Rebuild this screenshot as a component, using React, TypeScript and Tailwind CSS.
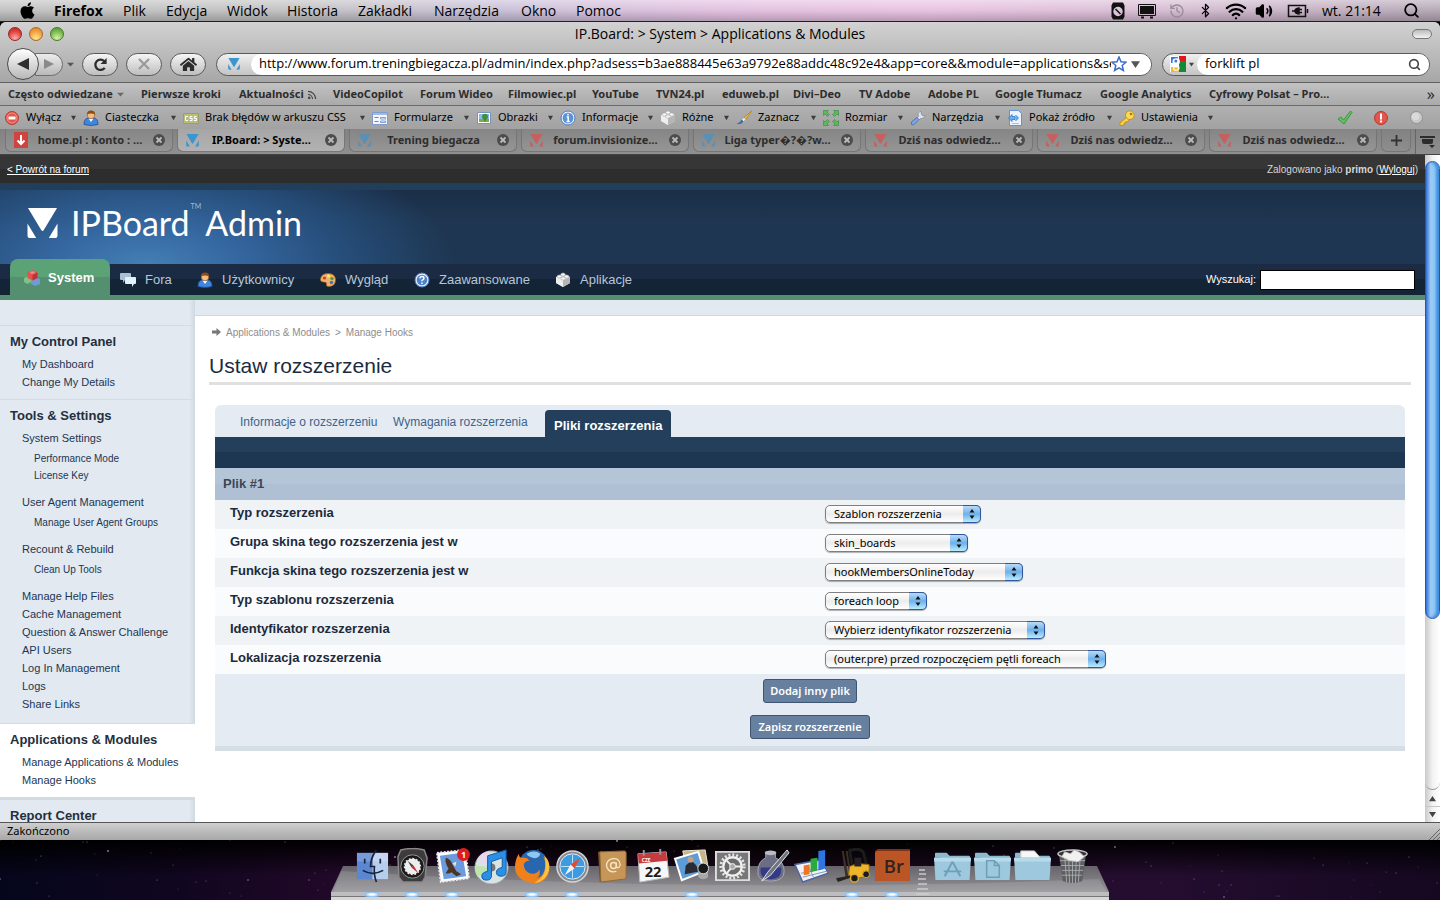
import React from 'react';
import { Bluetooth, History, Search, Volume2, Wifi } from 'lucide-react';
import { FaApple, FaHome } from 'react-icons/fa';

interface IconProps {
    className?: string;
}

/* ---------- Shared icons ---------- */

const BoardMark: React.FC<IconProps> = ({ className = 'size-4 text-[#3d95d0]' }) => (
    <svg viewBox="0 0 32 32" className={className} fill="currentColor">
        <path d="M1 0h30L17.500 22.500q-1.500 2.500-3 0z" />
        <path d="M0.500 16v12q0 3 3 3h6z" />
        <path d="M31.500 16v12q0 3-3 3h-6z" />
    </svg>
);

const CaretIcon: React.FC<IconProps> = ({ className = 'w-[5px] h-[6px] text-[#3c3c3c]' }) => (
    <svg viewBox="0 0 8 8" className={className} fill="currentColor" preserveAspectRatio="none">
        <path d="M0 1h8L4 7z" />
    </svg>
);

const UserIcon: React.FC<IconProps> = ({ className = 'size-4' }) => (
    <svg viewBox="0 0 16 16" className={className}>
        <path d="M1 14.500q0-6 4-6.500h6q4 .5 4 6.500-7 2-14 0z" fill="#3f86dd" stroke="#1f4f9a" strokeWidth=".8" />
        <path d="M5.500 8.500h5L8 12z" fill="#fff" />
        <circle cx="8" cy="5" r="3.800" fill="#f2bd84" stroke="#8a4e14" strokeWidth=".6" />
        <path d="M4 4.500Q4 .5 8 .5t4 4Q8 2.500 4 4.500z" fill="#8f4c10" />
    </svg>
);

const BrickIcon: React.FC<IconProps> = ({ className = 'size-4' }) => (
    <svg viewBox="0 0 16 16" className={className}>
        <path d="M1 5l7-3 7 3v6l-7 4-7-4z" fill="#dedede" />
        <path d="M8 8.500l7-3.500v6l-7 4z" fill="#b5b5b5" />
        <path d="M1 5l7 3.500V15l-7-4z" fill="#eee" />
        <g fill="#fafafa" stroke="#a8a8a8" strokeWidth=".6">
            <ellipse cx="8" cy="2.500" rx="2.200" ry="1.500" />
            <ellipse cx="4.300" cy="4.500" rx="2.200" ry="1.500" />
            <ellipse cx="11.700" cy="4.500" rx="2.200" ry="1.500" />
            <ellipse cx="8" cy="6.500" rx="2.200" ry="1.500" />
        </g>
    </svg>
);

const StopSign = () => (
    <svg viewBox="0 0 16 16" className="size-4">
        <circle cx="8" cy="8" r="6.500" fill="#e2564b" stroke="#bd3b32" />
        <circle cx="8" cy="8" r="5" fill="none" stroke="#f3a39d" strokeWidth=".8" />
        <path d="M4.500 6.500h7v3h-7z" fill="#fff" />
    </svg>
);

const CssIcon = () => (
    <svg viewBox="0 0 16 16" className="size-4">
        <path d="M.5 3.500h15v10H.5z" fill="#b9bd7c" stroke="#9ba05f" />
        <path d="M5 6.500H2.500v4H5M9.200 6.500H7v2h2.200v2H6.800M13.500 6.500h-2.200v2h2.200v2h-2.500" fill="none" stroke="#fff" />
    </svg>
);

const FormIcon = () => (
    <svg viewBox="0 0 16 16" className="size-4">
        <path d="M.5 2.500h15v12H.5z" fill="#f3f7fd" stroke="#7f9ccc" />
        <path d="M1 3h14v2H1z" fill="#9dbbe8" />
        <path d="M2.500 7.500h4M2.500 11.500h4" stroke="#6487c4" />
        <path d="M8.500 7.500h5v1.500h-5zM8.500 11h5v1.500h-5z" fill="#fff" stroke="#6487c4" strokeWidth=".8" />
    </svg>
);

const ImageIcon = () => (
    <svg viewBox="0 0 16 16" className="size-4">
        <path d="M1.500 2.500h13v11h-13z" fill="#fff" stroke="#7a93bd" />
        <path d="M3 4h10v5H3z" fill="#8cb8ee" />
        <path d="M3 9h10v3H3z" fill="#73b04c" />
        <circle cx="9" cy="6.800" r="3" fill="#3f9238" />
        <path d="M8.500 9h1v2.500h-1z" fill="#784a20" />
    </svg>
);

const InfoIcon = () => (
    <svg viewBox="0 0 16 16" className="size-4">
        <circle cx="8" cy="8" r="7" fill="#fff" stroke="#4a78bd" />
        <circle cx="8" cy="8" r="5.500" fill="#5b92d8" />
        <path d="M8 3.800v1.700M6.700 7h1.500v4.500M6.500 11.500h3.300" stroke="#fff" strokeWidth="1.500" fill="none" />
    </svg>
);

const HelpIcon = () => (
    <svg viewBox="0 0 16 16" className="size-4">
        <circle cx="8" cy="8" r="7" fill="#e6f0fc" stroke="#4a78bd" />
        <circle cx="8" cy="8" r="5.300" fill="#4d83c9" />
        <path d="M6 6.500q0-2 2-2t2 1.700Q10 7.500 8 8.300v1M8 10.500v1.500" stroke="#fff" strokeWidth="1.400" fill="none" />
    </svg>
);

const BrushIcon = () => (
    <svg viewBox="0 0 16 16" className="size-4">
        <path d="M15.500 1L8 7.500l2 2z" fill="#f2b73b" stroke="#b47d14" strokeWidth=".7" />
        <path d="M8 7.500L5.500 9.500l2 2L10 9.500z" fill="#e9e9e9" stroke="#999" strokeWidth=".6" />
        <path d="M5.500 9.500Q4 13 .5 13.500 5 15.500 7.500 11.500z" fill="#3f6fae" />
    </svg>
);

const ResizeIcon = () => (
    <svg viewBox="0 0 16 16" className="size-4" fill="#5cb85a" stroke="#2f8f3a" strokeWidth=".6">
        <path d="M.5.5h5L4 2l2.500 2.500-2 2L2 4 .5 5.500z" />
        <path d="M15.500.5v5L14 4l-2.500 2.500-2-2L12 2 10.500.5z" />
        <path d="M.5 15.500v-5L2 12l2.500-2.500 2 2L4 14l1.500 1.500z" />
        <path d="M15.500 15.500h-5L12 14l-2.500-2.500 2-2L14 12l1.500-1.500z" />
    </svg>
);

const WrenchIcon = () => (
    <svg viewBox="0 0 16 16" className="size-4">
        <path d="M10 1.500q-3 1.500-1.500 5L7 8l2 2 1.500-1.500q3.500.5 5-3l-2.500.5-1.800-1.800L11.500 2z" fill="#dfe3ea" stroke="#7d869a" strokeWidth=".7" />
        <path d="M7 7.500L1.500 12q-1 3 2 3L9 9.500z" fill="#7da6e6" stroke="#3f69ad" strokeWidth=".8" />
    </svg>
);

const SourceIcon = () => (
    <svg viewBox="0 0 16 16" className="size-4">
        <path d="M2.500 .5h9l3 3v12h-12z" fill="#eaf3ff" stroke="#5f93d6" />
        <path d="M8.500 5l3 3-3 3M5 4.500L1.500 8 5 11.500v-2h3v-3H5z" fill="#6aaeed" stroke="#2f78c6" strokeWidth=".8" />
        <path d="M5 13.500h7" stroke="#9dc0ee" />
    </svg>
);

const KeyIcon = () => (
    <svg viewBox="0 0 16 16" className="size-4">
        <path d="M8 7L1 13v2.500h3.500V14H6v-2h2l3-3z" fill="#fbd146" stroke="#bd8610" strokeWidth=".8" />
        <circle cx="10.800" cy="5.200" r="4.300" fill="#fcd95a" stroke="#bd8610" strokeWidth=".8" />
        <circle cx="12" cy="4" r="1.300" fill="#a8780c" />
    </svg>
);

const ChatIcon = () => (
    <svg viewBox="0 0 16 16" className="size-4">
        <path d="M1 1h9q1 0 1 1v5q0 1-1 1H5l-2 3V8H1Q0 8 0 7V2q0-1 1-1z" fill="#a9bfd4" />
        <path d="M6 5h9q1 0 1 1v5q0 1-1 1h-1l-2 3v-3H6q-1 0-1-1V6q0-1 1-1z" fill="#e4f1fb" />
    </svg>
);

const PaletteIcon = () => (
    <svg viewBox="0 0 16 16" className="size-4">
        <path d="M8 1.500q7 0 7.500 6 0 7-7 7-2.500 0-2-2.500t-3-2Q.5 10 .5 7.500q.5-6 7.500-6z" fill="#f0b268" stroke="#b06a25" strokeWidth=".7" />
        <circle cx="4.500" cy="6" r="1.600" fill="#d43c2e" />
        <circle cx="8.500" cy="4" r="1.500" fill="#f6f06a" />
        <circle cx="12" cy="6.500" r="1.600" fill="#3d9a47" />
        <circle cx="11.500" cy="10.500" r="1.700" fill="#3d71c4" />
    </svg>
);

const BlocksIcon = () => (
    <svg viewBox="0 0 16 16" className="size-4">
        <path d="M0 8l3.500-1.500L7 8v4l-3.500 2L0 12z" fill="#7dc284" />
        <path d="M7 9l4.500-1.500L16 9v5l-4.500 2L7 14z" fill="#6f9bd6" />
        <path d="M3.500 2.500L8.500 0l5 2.500V8l-5 2.500-5-2.500z" fill="#e05350" />
        <path d="M8.500 5l5-2.500V8l-5 2.500z" fill="#bd3334" />
        <ellipse cx="8.500" cy="2.500" rx="2.500" ry="1.300" fill="#f08a85" />
    </svg>
);

/* ---------- Mac menu bar ---------- */

const menus = [
    { label: 'Plik', width: 'w-[43px]' },
    { label: 'Edycja', width: 'w-[61px]' },
    { label: 'Widok', width: 'w-[60px]' },
    { label: 'Historia', width: 'w-[71px]' },
    { label: 'Zakładki', width: 'w-[76px]' },
    { label: 'Narzędzia', width: 'w-[87px]' },
    { label: 'Okno', width: 'w-[55px]' },
    { label: 'Pomoc', width: 'w-[60px]' },
];

const MenuBar = () => (
    <header className="flex h-[22px] shrink-0 items-center border-b border-[#241c2b] bg-[linear-gradient(to_bottom,rgba(255,255,255,0.35),rgba(0,0,0,0.02)_50%,rgba(0,0,0,0.22)),linear-gradient(to_right,#c6c6c6,#c6c6c8_22%,#cdc4dc_35%,#e6c4e4_50%,#ecc6e6_65%,#dcc2d8_80%,#b9acba)] text-sm text-black">
        <div className="flex w-[54px] justify-center">
            <FaApple className="size-[19px]" />
        </div>
        <button className="w-[69px] text-left font-bold">Firefox</button>
        {menus.map((m) => (
            <button key={m.label} className={`${m.width} text-left whitespace-nowrap`}>
                {m.label}
            </button>
        ))}
        <div className="ml-auto flex items-center pr-5">
            <svg viewBox="0 0 16 18" className="mr-3 h-[18px] w-4">
                <path d="M3 .5h10l1.500 3v11l-1.500 3H3l-1.500-3v-11z" fill="#111" />
                <circle cx="8" cy="9.500" r="4.700" fill="#dcc3da" />
                <path d="M5.500 7l5 5" stroke="#111" strokeWidth="1.500" />
            </svg>
            <svg viewBox="0 0 18 16" className="mr-[13px] h-4 w-[18px]">
                <path d="M.5 1.500h17v11H.5z" fill="none" stroke="#111" />
                <path d="M2 3h14v8H2z" fill="#111" />
                <path d="M3 14.500h3M12 14.500h3" stroke="#111" strokeWidth="2" />
            </svg>
            <History className="mr-[13px] size-4 text-[#9b8b9b]" />
            <Bluetooth className="mr-3 size-[15px]" />
            <Wifi className="mr-2 size-[22px]" strokeWidth={2.500} />
            <Volume2 className="mr-[14px] size-[18px]" fill="currentColor" />
            <svg viewBox="0 0 22 14" className="mr-[13px] h-[14px] w-[22px]" fill="none" stroke="#111" strokeWidth="1.500">
                <path d="M1.500 1.500h17v11h-17z" />
                <path d="M20.500 5v4" />
                <path d="M5 7h3M15 5.500h-3M15 8.500h-3" />
                <path d="M8 7q0-2.500 4-3v6q-4-.5-4-3z" fill="#111" />
            </svg>
            <span className="mr-4 w-[65px] whitespace-nowrap">wt. 21:14</span>
            <Search className="size-[17px]" strokeWidth={2.500} />
        </div>
    </header>
);

/* ---------- Browser chrome ---------- */

const TitleBar = () => (
    <div className="flex h-6 items-center pr-2 pl-2">
        <div className="flex w-[60px] gap-[7px]">
            <span className="size-[14px] rounded-full border border-[#8c2a28] bg-[radial-gradient(circle_at_50%_85%,#ffb0a8,#e0403c_60%,#c8201c)]" />
            <span className="size-[14px] rounded-full border border-[#a8662a] bg-[radial-gradient(circle_at_50%_85%,#ffe690,#f0a03c_60%,#d88028)]" />
            <span className="size-[14px] rounded-full border border-[#48762e] bg-[radial-gradient(circle_at_50%_85%,#d4f4a0,#78b850_60%,#509030)]" />
        </div>
        <h1 className="flex-1 text-center text-sm">IP.Board: &gt; System &gt; Applications &amp; Modules</h1>
        <div className="flex w-[60px] justify-end">
            <span className="h-[10px] w-5 rounded-full border border-[#777] bg-linear-to-b from-[#bbb] to-[#f4f4f4]" />
        </div>
    </div>
);

const ToolButton = ({ label, children }: { label: string; children: React.ReactNode }) => (
    <button
        aria-label={label}
        className="flex h-[23px] w-9 shrink-0 items-center justify-center rounded-full border border-[#5a5a5a] bg-linear-to-b from-[#f6f6f6] to-[#bebebe]"
    >
        {children}
    </button>
);

const NavToolbar = () => (
    <div className="flex h-[37px] items-center gap-2 border-b border-[#606060] pr-[10px] pl-[7px]">
        <div className="flex items-center">
            <button
                aria-label="Wstecz"
                className="z-10 flex size-8 shrink-0 items-center justify-center rounded-full border border-[#4c4c4c] bg-linear-to-b from-white to-[#b8b8b8]"
            >
                <svg viewBox="0 0 12 12" className="size-3" fill="#2e2e2e">
                    <path d="M12 0v12L0 6z" />
                </svg>
            </button>
            <button
                aria-label="Dalej"
                className="-ml-1 flex h-[23px] w-7 shrink-0 items-center justify-center rounded-r-full border border-[#6e6e6e] bg-linear-to-b from-[#ededed] to-[#b8b8b8]"
            >
                <svg viewBox="0 0 12 12" className="size-[10px]" fill="#8a8a8a">
                    <path d="M0 0v12l12-6z" />
                </svg>
            </button>
            <CaretIcon className="ml-1 h-[5px] w-[7px] text-[#555]" />
        </div>
        <ToolButton label="Odśwież">
            <svg viewBox="0 0 16 16" className="size-[15px]" fill="none" stroke="#2c2c2c" strokeWidth="2.400">
                <path d="M12.500 11.500A5.500 5.500 0 1 1 12 4.500" />
                <path d="M14.500 1v6.500H8z" fill="#2c2c2c" stroke="none" />
            </svg>
        </ToolButton>
        <ToolButton label="Zatrzymaj">
            <svg viewBox="0 0 12 12" className="size-3" stroke="#9a9a9a" strokeWidth="2.200">
                <path d="M1 1l10 10M11 1L1 11" />
            </svg>
        </ToolButton>
        <ToolButton label="Strona startowa">
            <FaHome className="size-[17px] text-[#2c2c2c]" />
        </ToolButton>
        <div className="ml-[2px] flex h-[23px] min-w-0 flex-1 items-center overflow-hidden rounded-full border border-[#5a5a5a] bg-linear-to-b from-[#f0f0f0] to-[#c4c4c4]">
            <BoardMark className="mx-[11px] size-3 shrink-0 text-[#3d95d0]" />
            <div className="flex h-full min-w-0 flex-1 items-center rounded-l-full bg-white pr-[11px] pl-2">
                <input
                    aria-label="Adres"
                    className="min-w-0 flex-1 bg-transparent text-[13px] text-black outline-none"
                    defaultValue="http://www.forum.treningbiegacza.pl/admin/index.php?adsess=b3ae888445e63a9792e88addc48c92e4&app=core&&module=applications&sec"
                />
                <svg viewBox="0 0 16 16" className="size-4 shrink-0" fill="#fff" stroke="#3a6ccc" strokeWidth="1.500">
                    <path d="M8 1l2 4.800 5 .4-3.800 3.300 1.200 5L8 11.800l-4.400 2.700 1.200-5L1 6.200l5-.4z" />
                </svg>
                <CaretIcon className="ml-1 h-[9px] w-[9px] shrink-0 text-[#555]" />
            </div>
        </div>
        <div className="ml-[2px] flex h-[23px] w-[268px] shrink-0 items-center overflow-hidden rounded-full border border-[#5a5a5a] bg-linear-to-b from-[#f0f0f0] to-[#c4c4c4]">
            <svg viewBox="0 0 16 16" className="ml-[7px] size-4 shrink-0">
                <path d="M0 0h16v16H0z" fill="#fff" />
                <path d="M1 1h7v6H1z" fill="#3c78e0" />
                <path d="M9 0h7v5H9z" fill="#e01818" />
                <path d="M9 5h7v11H9z" fill="#128a38" />
                <path d="M1 11h8v5H1z" fill="#f4b82a" />
                <path d="M9 2.500Q2.500 1.500 2.500 5.500T7.500 8Q3 9 3 12.500t5 2q3-1.500.5-5.500 2.500-3 .5-6.500z" fill="#fff" />
                <circle cx="5.800" cy="5" r="1.500" fill="#3c78e0" />
                <ellipse cx="6" cy="12.500" rx="1.800" ry="1.200" fill="#f4b82a" />
            </svg>
            <CaretIcon className="mx-[3px] h-[5px] w-[5px] shrink-0 text-[#444]" />
            <div className="flex h-full min-w-0 flex-1 items-center rounded-l-full bg-white pr-2 pl-2">
                <input
                    aria-label="Szukaj"
                    className="min-w-0 flex-1 bg-transparent text-[13px] text-black outline-none"
                    defaultValue="forklift pl"
                />
                <Search className="size-[13px] shrink-0 text-[#444]" strokeWidth={3} />
            </div>
        </div>
    </div>
);

const bookmarks = [
    { label: 'Często odwiedzane', width: 'w-[133px]', mark: 'caret' },
    { label: 'Pierwsze kroki', width: 'w-[98px]' },
    { label: 'Aktualności', width: 'w-[94px]', mark: 'feed' },
    { label: 'VideoCopilot', width: 'w-[87px]' },
    { label: 'Forum Wideo', width: 'w-[88px]' },
    { label: 'Filmowiec.pl', width: 'w-[84px]' },
    { label: 'YouTube', width: 'w-[64px]' },
    { label: 'TVN24.pl', width: 'w-[66px]' },
    { label: 'eduweb.pl', width: 'w-[71px]' },
    { label: 'Divi–Deo', width: 'w-[66px]' },
    { label: 'TV Adobe', width: 'w-[69px]' },
    { label: 'Adobe PL', width: 'w-[67px]' },
    { label: 'Google Tłumacz', width: 'w-[105px]' },
    { label: 'Google Analytics', width: 'w-[109px]' },
    { label: 'Cyfrowy Polsat – Pro…', width: 'w-[140px]' },
];

const BookmarksBar = () => (
    <nav className="flex h-[23px] items-center border-b border-[#6a6a6a] bg-linear-to-b from-[#c2c2c2] to-[#aaa] pr-[5px] pl-2 font-['Noto_Sans',sans-serif] text-[11px] font-bold text-[#2d2d2d]">
        {bookmarks.map((b) => (
            <a key={b.label} href="#" className={`${b.width} flex shrink-0 items-center gap-1 whitespace-nowrap`}>
                {b.label}
                {b.mark === 'caret' && <CaretIcon className="h-[5px] w-[7px] text-[#6a6a6a]" />}
                {b.mark === 'feed' && (
                    <svg viewBox="0 0 10 10" className="size-[9px]" fill="none" stroke="#444" strokeWidth="1.300">
                        <path d="M0 1.500A8.500 8.500 0 0 1 8.500 10M0 5a5 5 0 0 1 5 5" />
                        <circle cx="1.300" cy="8.700" r=".8" fill="#444" />
                    </svg>
                )}
            </a>
        ))}
        <span className="ml-auto text-base leading-none font-normal">»</span>
    </nav>
);

const devTools = [
    { label: 'Wyłącz', width: 'w-[79px]', icon: <StopSign /> },
    { label: 'Ciasteczka', width: 'w-[100px]', icon: <UserIcon /> },
    { label: 'Brak błędów w arkuszu CSS', width: 'w-[189px]', icon: <CssIcon /> },
    { label: 'Formularze', width: 'w-[104px]', icon: <FormIcon /> },
    { label: 'Obrazki', width: 'w-[84px]', icon: <ImageIcon /> },
    { label: 'Informacje', width: 'w-[100px]', icon: <InfoIcon /> },
    { label: 'Różne', width: 'w-[76px]', icon: <BrickIcon /> },
    { label: 'Zaznacz', width: 'w-[87px]', icon: <BrushIcon /> },
    { label: 'Rozmiar', width: 'w-[87px]', icon: <ResizeIcon /> },
    { label: 'Narzędzia', width: 'w-[97px]', icon: <WrenchIcon /> },
    { label: 'Pokaż źródło', width: 'w-[112px]', icon: <SourceIcon /> },
    { label: 'Ustawienia', width: 'w-[101px]', icon: <KeyIcon /> },
];

const DevToolbar = () => (
    <div className="flex h-[23px] items-center bg-linear-to-b from-[#b0b0b0] to-[#a2a2a2] pr-4 pl-1 font-['Noto_Sans',sans-serif] text-[11px] text-black">
        {devTools.map((t) => (
            <button key={t.label} className={`${t.width} flex shrink-0 items-center gap-[6px] pr-[7px] whitespace-nowrap`}>
                {t.icon}
                <span>{t.label}</span>
                <CaretIcon className="ml-auto h-[6px] w-[5px] text-[#3c3c3c]" />
            </button>
        ))}
        <div className="ml-auto flex items-center gap-5">
            <svg viewBox="0 0 16 16" className="size-4">
                <path d="M1 9l3-2 2.500 3L13.500 1l1.500 1.500L7 14z" fill="#5fc25c" stroke="#2c8c34" strokeWidth=".8" />
            </svg>
            <svg viewBox="0 0 16 16" className="size-4">
                <circle cx="8" cy="8" r="6.500" fill="#e2564b" stroke="#b8372d" />
                <path d="M8 3.500v6M8 10.500v2" stroke="#fff" strokeWidth="2" />
            </svg>
            <svg viewBox="0 0 16 16" className="size-[15px]">
                <circle cx="8" cy="8" r="6.500" fill="#c9c9c9" stroke="#8f8f8f" />
                <circle cx="7" cy="7" r="4" fill="#dadada" />
            </svg>
        </div>
    </div>
);

const tabs = [
    { label: 'home.pl : Konto : …', icon: 'home' },
    { label: 'IP.Board: > Syste…', icon: 'blue', active: true },
    { label: 'Trening biegacza', icon: 'blue' },
    { label: 'forum.invisionize…', icon: 'red' },
    { label: 'Liga typer\uFFFD?\uFFFD?w…', icon: 'blue' },
    { label: 'Dziś nas odwiedz…', icon: 'red' },
    { label: 'Dziś nas odwiedz…', icon: 'red' },
    { label: 'Dziś nas odwiedz…', icon: 'red' },
];

const TabIcon = ({ kind, active }: { kind: string; active?: boolean }) => {
    if (kind === 'home') {
        return (
            <svg viewBox="0 0 14 16" className="h-4 w-[14px] shrink-0">
                <path d="M0 0h14v16H0z" fill="#d0443f" />
                <path d="M7 3v9M3.500 8.500L7 12l3.500-3.500" fill="none" stroke="#fff" strokeWidth="2" />
            </svg>
        );
    }
    const tint = kind === 'red' ? 'text-[#c4615f]' : active ? 'text-[#3d95d0]' : 'text-[#5b8fb3]';
    return <BoardMark className={`size-[13px] shrink-0 ${tint}`} />;
};

const TabBar = () => (
    <div className="flex h-[26px] items-start gap-1 border-b border-[#444] bg-linear-to-b from-[#828282] to-[#8f8f8f] pl-[5px]">
        {tabs.map((tab, i) => (
            <div
                key={i}
                className={`flex h-[23px] w-[168px] min-w-0 items-center rounded-b-md border-x border-b pr-[6px] pl-2 ${tab.active
                        ? 'border-[#777] bg-linear-to-b from-[#a6a6a6] to-[#b2b2b2] text-black'
                        : 'border-[#757575] bg-linear-to-b from-[#858585] to-[#959595] text-[#2d2d2d]'
                    }`}
            >
                <TabIcon kind={tab.icon} active={tab.active} />
                <a href="#" className="min-w-0 flex-1 text-center font-['Noto_Sans',sans-serif] text-[11px] font-bold whitespace-nowrap">
                    {tab.label}
                </a>
                <button aria-label="Zamknij kartę" className="shrink-0">
                    <svg viewBox="0 0 14 14" className="size-[14px]">
                        <circle cx="7" cy="7" r="6" fill="#4c4c4c" />
                        <path d="M4.500 4.500l5 5M9.500 4.500l-5 5" stroke="#bbb" strokeWidth="1.800" />
                    </svg>
                </button>
            </div>
        ))}
        <button aria-label="Nowa karta" className="flex h-[23px] w-[30px] shrink-0 items-center justify-center rounded-b-md border-x border-b border-[#757575]">
            <svg viewBox="0 0 12 12" className="size-[11px]" stroke="#333" strokeWidth="2">
                <path d="M6 0v12M0 6h12" />
            </svg>
        </button>
        <button aria-label="Lista kart" className="flex h-full flex-1 items-center justify-center border-l border-[#666]">
            <svg viewBox="0 0 16 14" className="h-[14px] w-4" fill="#2c2c2c">
                <path d="M0 1h15v2H0zM2 4h11v3q0 2-2 2H4Q2 9 2 7zM9 10h6l-3 3z" />
            </svg>
        </button>
    </div>
);

/* ---------- Admin page ---------- */

const mainNav = [
    { label: 'Fora', width: 'w-[77px]', icon: <ChatIcon /> },
    { label: 'Użytkownicy', width: 'w-[123px]', icon: <UserIcon /> },
    { label: 'Wygląd', width: 'w-[94px]', icon: <PaletteIcon /> },
    { label: 'Zaawansowane', width: 'w-[141px]', icon: <HelpIcon /> },
    { label: 'Aplikacje', width: 'w-[90px]', icon: <BrickIcon /> },
];

const PageHeader = () => (
    <header>
        <div className="flex h-7 items-center justify-between bg-linear-to-b from-[#363636] from-50% to-[#2d2d2d] to-50% px-[7px] text-[10px] text-[#d6d6d6]">
            <a href="#" className="text-white underline">
                &lt; Powrót na forum
            </a>
            <span>
                Zalogowano jako <b>primo</b> (
                <a href="#" className="text-white underline">
                    Wyloguj
                </a>
                )
            </span>
        </div>
        <div className="border-t-[7px] border-[#213e5b] bg-[radial-gradient(ellipse_310px_130px_at_145px_75px,#4380b4,#3567a0_30%,#264d79_65%,transparent),linear-gradient(to_bottom,#1b2e47,#1e3651_40%,#1e3651)]">
            <div className="flex h-[74px] items-center pb-2 pl-[27px] text-white">
                <BoardMark className="size-[31px] text-white" />
                <div className="ml-[13px] flex font-['Lato',sans-serif] text-[34px] leading-none font-normal">
                    IPBoard
                    <sup className="ml-px text-[7px] leading-none text-[#9db9d6]">TM</sup>
                    <span className="ml-1">Admin</span>
                </div>
            </div>
        </div>
        <nav className="flex h-9 items-start border-b-[5px] border-[#54906f] bg-linear-to-b from-[#1a2b43] from-50% to-[#142437] to-50% pl-[10px] text-[13px] text-[#b7c7d8]">
            <a
                href="#"
                className="-mt-[5px] flex h-[37px] w-[100px] items-center gap-2 rounded-t-lg bg-linear-to-b from-[#5ba277] from-50% to-[#54906f] to-50% pl-[14px] font-bold text-white"
            >
                <BlocksIcon />
                System
            </a>
            <div className="flex h-[31px] flex-1 items-center pl-[10px]">
                {mainNav.map((item) => (
                    <a key={item.label} href="#" className={`${item.width} flex shrink-0 items-center gap-[9px]`}>
                        {item.icon}
                        {item.label}
                    </a>
                ))}
                <label htmlFor="site-search" className="ml-auto text-[11px] text-white">
                    Wyszukaj:
                </label>
                <input id="site-search" className="mr-[10px] ml-1 h-5 w-[155px] border border-black bg-white px-1 text-black" />
            </div>
        </nav>
    </header>
);

interface SideItem {
    label: string;
    children?: string[];
}

const sections: { title: string; style: string; items: SideItem[] }[] = [
    {
        title: 'My Control Panel',
        style: 'border-t border-[#d0dce9] pb-2',
        items: [{ label: 'My Dashboard' }, { label: 'Change My Details' }],
    },
    {
        title: 'Tools & Settings',
        style: 'border-t border-[#d0dce9] pb-[10px]',
        items: [
            { label: 'System Settings', children: ['Performance Mode', 'License Key'] },
            { label: 'User Agent Management', children: ['Manage User Agent Groups'] },
            { label: 'Recount & Rebuild', children: ['Clean Up Tools'] },
            { label: 'Manage Help Files' },
            { label: 'Cache Management' },
            { label: 'Question & Answer Challenge' },
            { label: 'API Users' },
            { label: 'Log In Management' },
            { label: 'Logs' },
            { label: 'Share Links' },
        ],
    },
    {
        title: 'Applications & Modules',
        style: 'border-t border-[#d0dce9] bg-white pb-2',
        items: [{ label: 'Manage Applications & Modules' }, { label: 'Manage Hooks' }],
    },
    { title: 'Report Center', style: 'border-t-[3px] border-[#d3dae2]', items: [] },
];

const Sidebar = () => (
    <aside className="w-[195px] shrink-0 bg-linear-to-r from-[#e2e9f1] from-97% to-[#d0d8e1] pt-[25px] text-[#1d3652]">
        {sections.map((section) => (
            <section key={section.title} className={`pt-[6px] pl-[10px] ${section.style}`}>
                <h3 className="text-[13px] leading-5 font-bold text-[#252f3c]">{section.title}</h3>
                <ul className="mt-[3px] pl-3 text-[11px] leading-[18px] whitespace-nowrap">
                    {section.items.map((item) => (
                        <li key={item.label}>
                            <a href="#" className="block">
                                {item.label}
                            </a>
                            {item.children && (
                                <ul className="mt-[3px] mb-[9px] pl-3 text-[10px] leading-[17px]">
                                    {item.children.map((child) => (
                                        <li key={child}>
                                            <a href="#" className="block">
                                                {child}
                                            </a>
                                        </li>
                                    ))}
                                </ul>
                            )}
                        </li>
                    ))}
                </ul>
            </section>
        ))}
    </aside>
);

const fields = [
    { id: 'hook-type', label: 'Typ rozszerzenia', value: 'Szablon rozszerzenia', width: 'w-[156px]' },
    { id: 'skin-group', label: 'Grupa skina tego rozszerzenia jest w', value: 'skin_boards', width: 'w-[143px]' },
    { id: 'skin-function', label: 'Funkcja skina tego rozszerzenia jest w', value: 'hookMembersOnlineToday', width: 'w-[198px]' },
    { id: 'template-type', label: 'Typ szablonu rozszerzenia', value: 'foreach loop', width: 'w-[102px]' },
    { id: 'hook-id', label: 'Identyfikator rozszerzenia', value: 'Wybierz identyfikator rozszerzenia', width: 'w-[220px]' },
    { id: 'hook-position', label: 'Lokalizacja rozszerzenia', value: '(outer.pre) przed rozpoczęciem pętli foreach', width: 'w-[281px]' },
];

const AquaSelect = ({ id, value, width }: { id: string; value: string; width: string }) => (
    <div className={`relative h-[18px] ${width}`}>
        <select
            id={id}
            className="block h-full w-full appearance-none rounded-[5px] border border-[#7e7e7e] bg-linear-to-b from-white via-[#ececec] to-white pl-2 font-['Noto_Sans',sans-serif] text-[11px] leading-4 text-black shadow-[0_1px_1px_rgba(0,0,0,0.3)]"
        >
            <option>{value}</option>
        </select>
        <span className="pointer-events-none absolute inset-y-0 right-0 flex w-[18px] items-center justify-center rounded-r-[5px] border border-l-0 border-[#34549c] bg-linear-to-b from-[#b9dbf8] via-[#6db0ea] to-[#b8ecff]">
            <svg viewBox="0 0 6 10" className="h-[10px] w-[6px]" fill="#111">
                <path d="M3 0l2.500 3.500h-5zM3 10l2.500-3.500h-5z" />
            </svg>
        </span>
    </div>
);

const HookForm = () => (
    <form className="mx-5 mt-5" onSubmit={(e) => e.preventDefault()}>
        <div className="flex h-8 items-end rounded-t-md bg-[#e4ebf3] pl-[25px] text-xs whitespace-nowrap text-[#40638a]">
            <a href="#" className="flex h-[30px] w-[153px] items-center">
                Informacje o rozszerzeniu
            </a>
            <a href="#" className="flex h-[30px] w-[152px] items-center">
                Wymagania rozszerzenia
            </a>
            <a href="#" className="flex h-[27px] items-center rounded-t bg-[#243f5c] px-[9px] pt-1 text-[13px] font-bold text-white">
                Pliki rozszerzenia
            </a>
        </div>
        <div className="h-[31px] bg-linear-to-b from-[#243f5c] from-50% to-[#1d3652] to-50%" />
        <h3 className="flex h-8 items-center bg-linear-to-b from-[#b4c5d7] from-50% to-[#afc0d4] to-50% pl-2 text-[13px] font-bold text-[#3d4654]">
            Plik #1
        </h3>
        <table className="w-full table-fixed">
            <tbody>
                {fields.map((f) => (
                    <tr key={f.id} className="h-[29px] odd:bg-[#eff3f6] even:bg-[#fafbfd]">
                        <td className="w-1/2 pb-1 pl-[15px] text-[13px] leading-5 font-bold text-[#1c2a3a]">
                            <label htmlFor={f.id}>{f.label}</label>
                        </td>
                        <td className="pb-[2px] pl-[15px]">
                            <AquaSelect id={f.id} value={f.value} width={f.width} />
                        </td>
                    </tr>
                ))}
            </tbody>
        </table>
        <div className="flex h-[77px] flex-col items-center gap-3 border-b-[5px] border-[#d5dde5] bg-[#e4ebf3] pt-[5px] font-['Noto_Sans',sans-serif] text-[11px] font-semibold text-white">
            <button type="button" className="h-6 w-[94px] rounded-[3px] border border-[#3d5573] bg-[#67809f]">
                Dodaj inny plik
            </button>
            <button type="submit" className="h-6 w-[120px] rounded-[3px] border border-[#3d5573] bg-[#67809f]">
                Zapisz rozszerzenie
            </button>
        </div>
    </form>
);

const AdminPage = () => (
    <div className="flex min-w-0 flex-1 flex-col overflow-hidden bg-[#e2e9f1] font-['Liberation_Sans',Arial,sans-serif]">
        <PageHeader />
        <div className="flex flex-1">
            <Sidebar />
            <main className="mt-[15px] min-w-0 flex-1 border-t border-[#d0d8e1] bg-white">
                <div className="flex h-8 items-center gap-[5px] pl-[17px] text-[10px] text-[#8d8d8d]">
                    <svg viewBox="0 0 9 8" className="h-2 w-[9px]" fill="#777">
                        <path d="M0 2.500h4.500V0L9 4 4.500 8V5.500H0z" />
                    </svg>
                    <a href="#">Applications &amp; Modules</a>
                    <span>&gt;</span>
                    <a href="#">Manage Hooks</a>
                </div>
                <h2 className="mr-[14px] ml-[14px] h-[37px] border-b-[3px] border-[#e0e0e0] text-[21px] leading-[36px] text-[#1b2b3e]">
                    Ustaw rozszerzenie
                </h2>
                <HookForm />
            </main>
        </div>
    </div>
);

const ScrollBar = () => (
    <div className="flex w-[15px] shrink-0 flex-col bg-linear-to-r from-[#c9c9c9] via-[#f2f2f2] to-white pt-[6px]">
        <div className="flex min-h-0 flex-1 rounded-b-full border-b border-[#999]">
            <div className="h-[73%] w-full rounded-full border border-[#2457b4] bg-linear-to-r from-[#2f6fd6] via-[#9cc8f4] via-35% to-[#7fd0fa] shadow-[inset_-3px_0_3px_#3f8be0]" />
        </div>
        <button aria-label="W górę" className="flex h-4 items-center justify-center">
            <CaretIcon className="size-[7px] rotate-180 text-[#444]" />
        </button>
        <button aria-label="W dół" className="flex h-4 items-center justify-center border-t border-[#c4c4c4]">
            <CaretIcon className="size-[7px] text-[#444]" />
        </button>
    </div>
);

/* ---------- Dock ---------- */

const Folder = ({ children }: { children?: React.ReactNode }) => (
    <>
        <path d="M2 10V6q0-1 1-1h11l3 3h20q1 0 1 1v2z" fill="#8db9cf" />
        <path d="M1 10h38l-1.500 23h-35z" fill="#9dc8dd" />
        <path d="M1 10h38l-.3 4H1.300z" fill="#b7dbeb" />
        {children}
    </>
);

const dockApps: { name: string; running?: boolean; art: React.ReactNode }[] = [
    {
        name: 'Finder',
        running: true,
        art: (
            <>
                <path d="M4 5h16v27H4z" fill="#5a86d2" />
                <path d="M20 5h16v27H20z" fill="#b7cdee" />
                <path d="M4 5h32v9H4z" fill="#fff" opacity=".18" />
                <path d="M24 2q-6 8-6 17h4q-1 8 2 16M10 23q10 6 21 0M12 11v5M28 11v5" fill="none" stroke="#16243f" strokeWidth="1.700" />
            </>
        ),
    },
    {
        name: 'Compass',
        running: true,
        art: (
            <>
                <path d="M8 2q12-3 24 0l3 8-2 20-3 5H10l-4-5L5 9z" fill="#3d3b3c" stroke="#8b8888" strokeWidth="1.500" />
                <circle cx="20" cy="19" r="12" fill="#171717" stroke="#999" />
                <circle cx="20" cy="19" r="9" fill="#eee" stroke="#222" strokeWidth="2" strokeDasharray="2 2" />
                <path d="M15 13l6 5-2 2z" fill="#444" />
                <path d="M26 26l-7-6 2-2z" fill="#d22" />
            </>
        ),
    },
    {
        name: 'Mail',
        running: true,
        art: (
            <>
                <path d="M4 5l29-3 4 29-29 4z" fill="#fff" stroke="#e8e8e8" strokeDasharray="2 1.500" strokeWidth="2" />
                <path d="M7 8l23-3 4 24-23 3z" fill="#6b9bdc" />
                <path d="M13 10q5 1 7 7l4 7 5 3-5 2-5-4q-3 2-6 1l3-5q-4-5-3-11z" fill="#4a3524" />
                <path d="M20 16l4-2-1 5z" fill="#f0e4cf" />
            </>
        ),
    },
    {
        name: 'iTunes',
        art: (
            <>
                <circle cx="19" cy="20" r="17" fill="#d7e4e2" stroke="#9caaa9" />
                <path d="M19 20L4 12q4-8 13-9z" fill="#e7d8ee" />
                <path d="M19 20L5 30q-4-6-3-12z" fill="#bfe4ae" />
                <circle cx="19" cy="20" r="4" fill="#777" />
                <path d="M15 8L34 2v22q0 5-5 5t-5-4 6-5V10l-11 4v14q0 5-5 5t-5-4 6-5z" fill="#2b8fe6" stroke="#135aa9" />
            </>
        ),
    },
    {
        name: 'Firefox',
        running: true,
        art: (
            <>
                <circle cx="21" cy="17" r="15" fill="#2866b0" />
                <path d="M14 6q8-5 14 0-2 6-8 4t-6-4z" fill="#8dc8ee" />
                <path d="M6 6q0 4 3 4 5-1 8 3-5 0-6 4 0 6 6 9 7 2 10-4 2 6-3 9 8-2 9-11 1-6-2-11 7 6 6 14-2 13-16 13Q3 34 2 20 2 12 6 6z" fill="#f0801c" />
                <path d="M32 8q7 6 5 15-3 11-15 13 10-6 11-14 1-8-1-14z" fill="#fac33e" />
            </>
        ),
    },
    {
        name: 'Safari',
        running: true,
        art: (
            <>
                <circle cx="20" cy="19" r="16" fill="#88898c" stroke="#d4d5d6" strokeWidth="1.500" />
                <circle cx="20" cy="19" r="13" fill="#3e9be0" stroke="#e3eef7" />
                <path d="M20 7v24M8 19h24" stroke="#bfe2fa" strokeWidth="1" />
                <path d="M28 10l-6 11-4-4z" fill="#e8492e" />
                <path d="M12 28l6-11 4 4z" fill="#f2f2f2" />
            </>
        ),
    },
    {
        name: 'Address Book',
        art: (
            <>
                <path d="M5 4l5-1v31l-3 1z" fill="#6d4a26" />
                <path d="M7 4l25-1q2 0 2 2v25q0 2-2 2L8 35z" fill="#c59657" stroke="#8f6733" />
                <circle cx="21" cy="18" r="3" fill="none" stroke="#f6e5c4" strokeWidth="1.500" />
                <path d="M24 15v5q3 1 4-3-1-7-8-6-7 2-6 8 2 7 10 5" fill="none" stroke="#f6e5c4" strokeWidth="1.300" />
            </>
        ),
    },
    {
        name: 'iCal',
        art: (
            <>
                <path d="M5 6l29-2 3 26-30 5z" fill="#f7f7f7" stroke="#bbb" />
                <path d="M5 6l29-2 1 9-29 3z" fill="#c53b3f" />
                <path d="M11 2v6M28 1v6" stroke="#999" strokeWidth="2" />
                <text x="12" y="30" fontSize="15" fontWeight="700" fill="#1c1c1c">22</text>
                <text x="9" y="14" fontSize="5" fontWeight="700" fill="#fff">CZE</text>
            </>
        ),
    },
    {
        name: 'iPhoto',
        running: true,
        art: (
            <>
                <path d="M10 3l23-1 3 18-22 3z" fill="#c9b487" stroke="#efe7d2" />
                <path d="M2 11l24-7 6 20-23 9z" fill="#5f9cd6" stroke="#fff" strokeWidth="2" />
                <path d="M12 27l1-9 6-5 4 4 5 7z" fill="#2b2b36" />
                <circle cx="18" cy="12" r="3" fill="#caa07c" />
                <path d="M26 17h10v13q-5 4-10 0z" fill="#a8a8aa" />
                <circle cx="31" cy="21" r="5.500" fill="#16181a" stroke="#d7d7d7" />
            </>
        ),
    },
    {
        name: 'System Preferences',
        art: (
            <>
                <path d="M3 4h34v29H3z" fill="#777" stroke="#ddd" strokeWidth="2" />
                <circle cx="20" cy="19" r="12" fill="none" stroke="#e5e5e5" strokeWidth="3" strokeDasharray="2 2" />
                <circle cx="20" cy="19" r="9.500" fill="#6c6c6c" stroke="#efefef" strokeWidth="2.500" />
                <path d="M20 19l-6-6M20 19h9M20 19l-6 7" stroke="#eee" strokeWidth="2" />
                <circle cx="20" cy="19" r="3" fill="#aaa" stroke="#eee" />
            </>
        ),
    },
    {
        name: 'Script Editor',
        art: (
            <>
                <path d="M13 4h10v6q9 4 9 14 0 10-14 10T5 24q0-10 8-14z" fill="#6b6d84" stroke="#a6a7b7" />
                <path d="M8 20h21q1 12-11 12T8 20z" fill="#343a86" />
                <ellipse cx="18" cy="5" rx="6" ry="2.500" fill="#b9bac4" />
                <path d="M35 2L15 25l-6 9 9-6L37 5z" fill="#70757f" stroke="#e3e5ea" />
            </>
        ),
    },
    {
        name: 'Numbers',
        art: (
            <>
                <path d="M2 17l27-5 7 14-26 9z" fill="#f1f2f5" stroke="#4c68a6" strokeWidth="1.500" />
                <path d="M8 26l24-5M10 30l24-6M16 19l5 11" stroke="#8297bb" />
                <path d="M11 18l6-1v10l-6 1z" fill="#ee7427" />
                <path d="M18 11l7-1v13l-7 2z" fill="#2fa83f" />
                <path d="M26 3l7-1v19l-7 2z" fill="#2f74e0" />
            </>
        ),
    },
    {
        name: 'Forklift',
        running: true,
        art: (
            <>
                <path d="M9 3h2l5 28h-3zM13 3h2l4 26h-2z" fill="#3b3024" />
                <path d="M3 31l16-3v2L5 35z" fill="#272320" />
                <path d="M17 3q9-4 14 1l4 15H20z" fill="none" stroke="#1c1c1c" strokeWidth="3" />
                <path d="M17 19l8-3 12 1q1 9-2 12l-14 3-5-5z" fill="#efb52a" stroke="#94680d" />
                <path d="M22 10h7v9h-7z" fill="#222" />
                <circle cx="22" cy="31" r="4" fill="#1b1b1b" stroke="#e2a825" strokeWidth="1.500" />
                <circle cx="34" cy="27" r="3.500" fill="#1b1b1b" stroke="#e2a825" />
            </>
        ),
    },
    {
        name: 'Bridge',
        running: true,
        art: (
            <>
                <path d="M2 3l3-2h33v32H2z" fill="#7d3216" />
                <path d="M4 3h34v31H2V5z" fill="#bb5526" />
                <text x="11" y="26" fontSize="19" fontWeight="600" fill="#33231c">Br</text>
            </>
        ),
    },
];

const dockFolders = [
    {
        name: 'Aplikacje',
        art: (
            <Folder>
                <path d="M20 14l-8 15M20 14l8 15M11 24h18" fill="none" stroke="#6d9fb8" strokeWidth="2" />
            </Folder>
        ),
    },
    {
        name: 'Dokumenty',
        art: (
            <Folder>
                <path d="M14 13h8l5 5v12H14zM22 13v5h5" fill="none" stroke="#6d9fb8" strokeWidth="1.500" />
            </Folder>
        ),
    },
    {
        name: 'Pobrane',
        art: (
            <Folder>
                <path d="M8 3h14l6 7H8z" fill="#f7f7f7" stroke="#ccc" />
            </Folder>
        ),
    },
    {
        name: 'Kosz',
        art: (
            <>
                <path d="M6 6h28l-4 28q-10 4-20 0z" fill="#5d5f62" />
                <path
                    d="M7 13h26M8 18h24M9 23h22M9 28h21M12 8l2 27M16 9l1 27M20 9v27M24 9l-1 27M28 8l-2 27"
                    stroke="#b5b7ba"
                    strokeWidth=".8"
                />
                <ellipse cx="20" cy="6" rx="15" ry="4" fill="#333" stroke="#c9c9c9" strokeWidth="1.500" />
                <path d="M9 9l3-5 6 2 4-4 6 3 4 4-6 5-9-1z" fill="#f1f1f1" stroke="#c4c4c4" />
            </>
        ),
    },
];

const DockItem = ({ name, running, art }: { name: string; running?: boolean; art: React.ReactNode }) => (
    <button aria-label={name} className="relative flex h-[60px] w-10 shrink-0 flex-col items-center justify-between pt-2">
        <svg viewBox="0 0 40 37" className="h-9 w-[39px] font-['Open_Sans',sans-serif]">
            {art}
        </svg>
        {running && <span className="mb-[3px] h-[5px] w-4 rounded-full bg-[radial-gradient(ellipse,#fff_20%,#8cc4f6_60%,transparent)]" />}
        {name === 'Mail' && (
            <span className="absolute top-2 right-[2px] flex size-[13px] items-center justify-center rounded-full bg-[#e01b1b] text-[9px] font-bold text-white">
                1
            </span>
        )}
    </button>
);

/* Deterministic scatter, so the sky looks the same on every render */
const stars = Array.from({ length: 130 }, (_, i) => ({
    x: (i * 379 + ((i * i * 31) % 97)) % 1440,
    y: (i * 23 + ((i * i * 7) % 41)) % 60,
    r: i % 9 === 0 ? 1.1 : 0.6,
}));

const Dock = () => (
    <footer className="relative flex h-[60px] shrink-0 justify-center bg-[linear-gradient(to_bottom,#000,transparent_60%),linear-gradient(to_right,#05061c,#10061f_12%,#24092a_25%,#180818_55%,#250d30_80%,#150820)]">
        <svg viewBox="0 0 1440 60" preserveAspectRatio="none" className="absolute inset-0 h-full w-full" fill="#a9a1b8">
            {stars.map((s, i) => (
                <circle key={i} cx={s.x} cy={s.y} r={s.r} opacity={0.2 + (i % 5) * 0.13} />
            ))}
        </svg>
        <div className="relative flex w-[778px] pl-[21px]">
            <svg viewBox="0 0 778 34" className="absolute bottom-0 left-0 h-[34px] w-full">
                <defs>
                    <linearGradient id="shelf" x1="0" y1="0" x2="0" y2="1">
                        <stop offset="0" stopColor="#66646a" />
                        <stop offset="1" stopColor="#a2a1a4" />
                    </linearGradient>
                </defs>
                <path d="M12 0h754l12 26v8H0v-8z" fill="url(#shelf)" />
                <path d="M10 5q370 24 758 8l8 14H2z" fill="#fff" opacity=".12" />
                <path d="M0 26h778v5H0z" fill="#bdbcbf" />
                <path d="M0 30h778v1H0z" fill="#77767a" />
                <path d="M0 31h778v3H0z" fill="#d6d6d6" />
            </svg>
            {dockApps.map((app) => (
                <DockItem key={app.name} {...app} />
            ))}
            <svg viewBox="0 0 20 60" className="relative h-[60px] w-5 shrink-0" fill="#cfcfcf" opacity=".7">
                <path d="M7 29h6v2H7zM7 33h7v2H7zM6 38h8v2H6zM6 43h9v2H6zM5 48h11v2H5zM4 53h13v2H4z" />
            </svg>
            {dockFolders.map((f) => (
                <DockItem key={f.name} {...f} />
            ))}
        </div>
    </footer>
);

export default function App() {
    return (
        <div className="flex h-screen flex-col overflow-hidden bg-black font-['Open_Sans','Noto_Sans',sans-serif]">
            <MenuBar />
            <div className="flex min-h-0 flex-1 flex-col overflow-hidden rounded-t-md bg-[#a8a8a8]">
                <div className="shrink-0">
                    <div className="bg-linear-to-b from-[#d2d2d2] to-[#a6a6a6]">
                        <TitleBar />
                        <NavToolbar />
                    </div>
                    <BookmarksBar />
                    <DevToolbar />
                    <TabBar />
                </div>
                <div className="flex min-h-0 flex-1 overflow-hidden">
                    <AdminPage />
                    <ScrollBar />
                </div>
                <div className="flex h-[18px] shrink-0 items-center justify-between border-t border-[#555] bg-linear-to-b from-[#cfcfcf] to-[#a8a8a8] pl-[7px] font-['Noto_Sans',sans-serif] text-[11px] text-black">
                    Zakończono
                    <svg viewBox="0 0 12 12" className="size-3 self-end" stroke="#666" strokeWidth="1">
                        <path d="M1 12L12 1M5 12l7-7M9 12l3-3" />
                    </svg>
                </div>
            </div>
            <Dock />
        </div>
    );
}
